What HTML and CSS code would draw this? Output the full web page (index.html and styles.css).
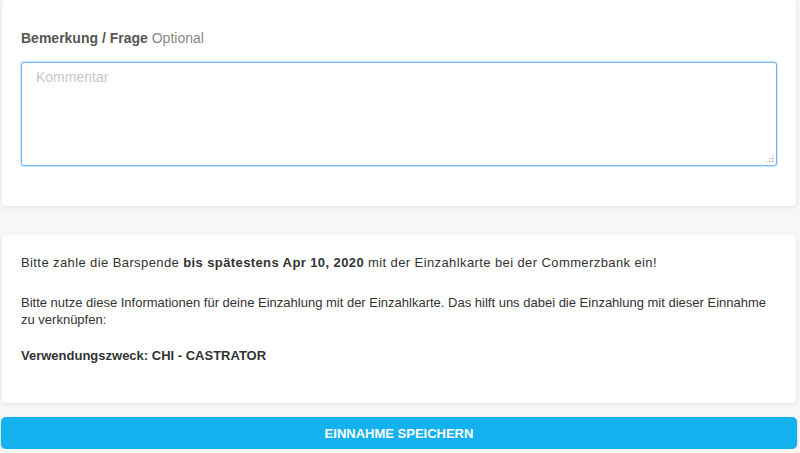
FILE: index.html
```html
<!DOCTYPE html>
<html lang="de">

<head>
  <meta charset="UTF-8">
  <meta name="viewport" content="width=device-width, initial-scale=1.0">
  <title>Einnahme</title>

  <link rel="stylesheet" href="styles.css">
</head>

<body>
  <main class="page">
    <section class="card comment-card">
      <label class="field-label" for="comment">Bemerkung / Frage <span class="optional">Optional</span></label>
      <div class="input-wrap">
        <textarea id="comment" class="comment-input" placeholder="Kommentar"></textarea>
      </div>
    </section>

    <section class="card info-card">
      <p class="lead">Bitte zahle die Barspende <strong>bis spätestens Apr 10, 2020</strong> mit der Einzahlkarte bei der Commerzbank ein!</p>
      <p class="hint">Bitte nutze diese Informationen für deine Einzahlung mit der Einzahlkarte. Das hilft uns dabei die Einzahlung mit dieser Einnahme zu verknüpfen:</p>
      <p class="purpose"><strong>Verwendungszweck: CHI - CASTRATOR</strong></p>
    </section>

    <button class="save-btn">Einnahme speichern</button>
  </main>
</body>

</html>
```

FILE: styles.css
```css
* {
  box-sizing: border-box;
}

body {
  background: #f7f7f8;
  color: #333;
  font-family: "Liberation Sans", Arial, sans-serif;
  font-size: 14px;
  margin: 0;
}

.page {
  display: flex;
  flex-direction: column;
  padding: 0 4px 0 2px;
}

.card {
  background: #fff;
  border-radius: 4px;
  box-shadow: 0 1px 4px rgba(40, 40, 90, 0.12);
}

.comment-card {
  display: flex;
  flex-direction: column;
  padding: 29px 19px 40px;
}

.field-label {
  color: #555;
  font-weight: bold;
  line-height: 18px;
  margin-bottom: 15px;
}

.optional {
  color: #888;
  font-weight: normal;
}

.input-wrap {
  position: relative;
}

/* dotted resize grip */
.input-wrap::after {
  background: radial-gradient(circle, #aaa 0.8px, transparent 1.1px) 0 0 / 3px 3px;
  bottom: 3px;
  clip-path: polygon(100% 0, 100% 100%, 0 100%);
  content: "";
  height: 9px;
  position: absolute;
  right: 3px;
  width: 9px;
}

.comment-input {
  border: 1px solid #72b6f7;
  border-radius: 3px;
  box-shadow: 0 0 0 1px rgba(114, 182, 247, 0.35);
  color: #333;
  display: block;
  font-family: inherit;
  font-size: 14px;
  height: 104px;
  outline: none;
  padding: 6px 14px;
  resize: none;
  width: 100%;
}

.comment-input::placeholder {
  color: #c8c8c8;
}

.info-card {
  font-size: 13px;
  margin-top: 29px;
  padding: 19px 19px 39px;
}

.info-card p {
  line-height: 17px;
  margin: 0 0 23px;
}

.info-card p.lead {
  letter-spacing: 0.4px;
}

.info-card p.hint {
  margin-bottom: 19px;
}

.info-card p.purpose {
  margin: 0;
}

.save-btn {
  background: #14b1ef;
  border: none;
  border-radius: 5px;
  box-shadow: 0 1px 3px rgba(0, 0, 0, 0.2);
  color: #fff;
  cursor: pointer;
  font-family: inherit;
  font-size: 13px;
  font-weight: bold;
  height: 32px;
  margin: 14px -1px 0;
  text-transform: uppercase;
}
```
